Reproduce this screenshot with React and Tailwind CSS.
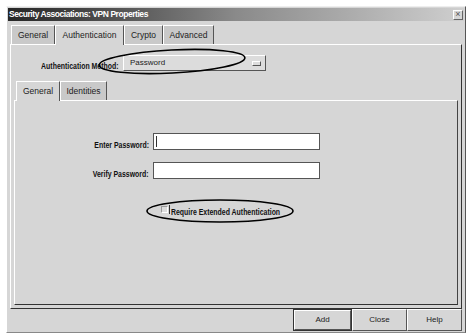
import React from 'react';

const ui = { fontFamily: '"Liberation Sans", Arial, sans-serif' };

function Tab({ label, active, w }) {
  return (
    <div
      style={ui}
      className={`flex items-center justify-center text-[8.5px] text-[#222] border-l border-t border-r border-l-white border-t-white border-r-[#555] ${w} ${
        active ? 'h-[20px] -mb-px bg-[#d6d6d6] z-10 relative' : 'h-[19px] bg-[#c9c9c9]'
      }`}
    >
      {label}
    </div>
  );
}

// condensed bold label, squeezed like the old Motif font
function Label({ children, origin = 'origin-right' }) {
  return (
    <span style={ui} className={`inline-block whitespace-nowrap text-[9px] font-bold text-[#111] scale-x-[0.77] ${origin}`}>
      {children}
    </span>
  );
}

function Btn({ label, def }) {
  return (
    <div className={`h-[22px] ${def ? 'border border-[#333] w-[59px]' : 'w-[55px]'}`}>
      <div
        style={ui}
        className="h-full flex items-center justify-center text-[8px] text-[#222] bg-[#d6d6d6] border border-t-white border-l-white border-r-[#555] border-b-[#555]"
      >
        {label}
      </div>
    </div>
  );
}

export default function App() {
  return (
    <div className="relative w-[470px] h-[334px] bg-white overflow-hidden">
      <div className="ml-[6px] mt-[6px] w-[460px] h-[327px] bg-[#d6d6d6] border-l border-t border-r border-b border-l-white border-t-[#eee] border-r-[#555] border-b-[#888] flex flex-col">
        {/* title bar */}
        <div className="mx-px mt-px h-[13px] flex items-center justify-between bg-gradient-to-r from-[#262626] via-[#8a8a8a] to-[#cfcfcf]">
          <span style={ui} className="pl-[1px] text-[8.5px] font-bold text-white leading-none tracking-[-0.45px]">
            Security Associations: VPN Properties
          </span>
          <div className="mr-[1px] w-[10px] h-[10px] border border-t-white border-l-white border-r-[#666] border-b-[#666] bg-[#d6d6d6] flex items-center justify-center text-[9px] leading-none text-[#555]" style={ui}>
            ×
          </div>
        </div>

        {/* outer tabs */}
        <div className="mt-[4px] pl-[4px] flex items-end">
          <Tab label="General" w="w-[44px]" />
          <Tab label="Authentication" active w="w-[69px]" />
          <Tab label="Crypto" w="w-[39px]" />
          <Tab label="Advanced" w="w-[51px]" />
        </div>

        {/* outer panel */}
        <div className="ml-[3px] w-[452px] h-[265px] border-l border-t border-r border-b border-l-white border-t-white border-r-[#333] border-b-[#333] flex flex-col">
          <div className="mt-[10px] flex items-center h-[16px]">
            <div className="w-[112px] text-right pr-[5px]">
              <Label>Authentication Method:</Label>
            </div>
            <div className="w-[143px] h-[16px] bg-[#dcdcdc] border border-t-white border-l-white border-r-[#555] border-b-[#555] flex items-center justify-between">
              <span style={ui} className="pl-[6px] text-[8px] text-[#222]">Password</span>
              <div className="mr-[4px] w-[9px] h-[5px] border border-t-white border-l-white border-r-[#555] border-b-[#555]" />
            </div>
          </div>

          {/* inner tabs */}
          <div className="mt-[10px] pl-[5px] flex items-end">
            <Tab label="General" active w="w-[44px]" />
            <Tab label="Identities" w="w-[47px]" />
          </div>

          <div className="ml-[3px] w-[444px] h-[205px] border-l border-t border-r border-b border-l-white border-t-white border-r-[#444] border-b-[#333] flex flex-col">
            <div className="mt-[32px] flex items-center h-[17px]">
              <div className="w-[138px] text-right pr-[4px]">
                <Label>Enter Password:</Label>
              </div>
              <div className="w-[167px] h-[17px] bg-white border border-[#555] flex items-center">
                <div className="ml-[2px] w-px h-[11px] bg-[#333]" />
              </div>
            </div>
            <div className="mt-[12px] flex items-center h-[17px]">
              <div className="w-[138px] text-right pr-[4px]">
                <Label>Verify Password:</Label>
              </div>
              <div className="w-[167px] h-[17px] bg-white border border-[#555]" />
            </div>
            <div className="mt-[24px] flex items-center h-[12px] pl-[146px]">
              <div className="w-[7px] h-[7px] border border-[#999] border-b-white border-r-white bg-[#ddd]" />
              <div className="ml-px w-px h-[9px] bg-[#333]" />
              <div className="ml-px">
                <Label origin="origin-left">Require Extended Authentication</Label>
              </div>
            </div>
          </div>
        </div>

        {/* buttons */}
        <div className="flex justify-end pr-[3px]">
          <Btn label="Add" def />
          <Btn label="Close" />
          <Btn label="Help" />
        </div>
      </div>

      {/* hand-drawn ellipses over the screenshot */}
      <svg className="absolute inset-0 pointer-events-none" width="470" height="334">
        <ellipse cx="172" cy="61.5" rx="73" ry="11.5" transform="rotate(-3 172 61.5)" fill="none" stroke="#000" strokeWidth="1.6" />
        <ellipse cx="220" cy="211" rx="73" ry="11" fill="none" stroke="#000" strokeWidth="1.6" />
      </svg>
    </div>
  );
}
